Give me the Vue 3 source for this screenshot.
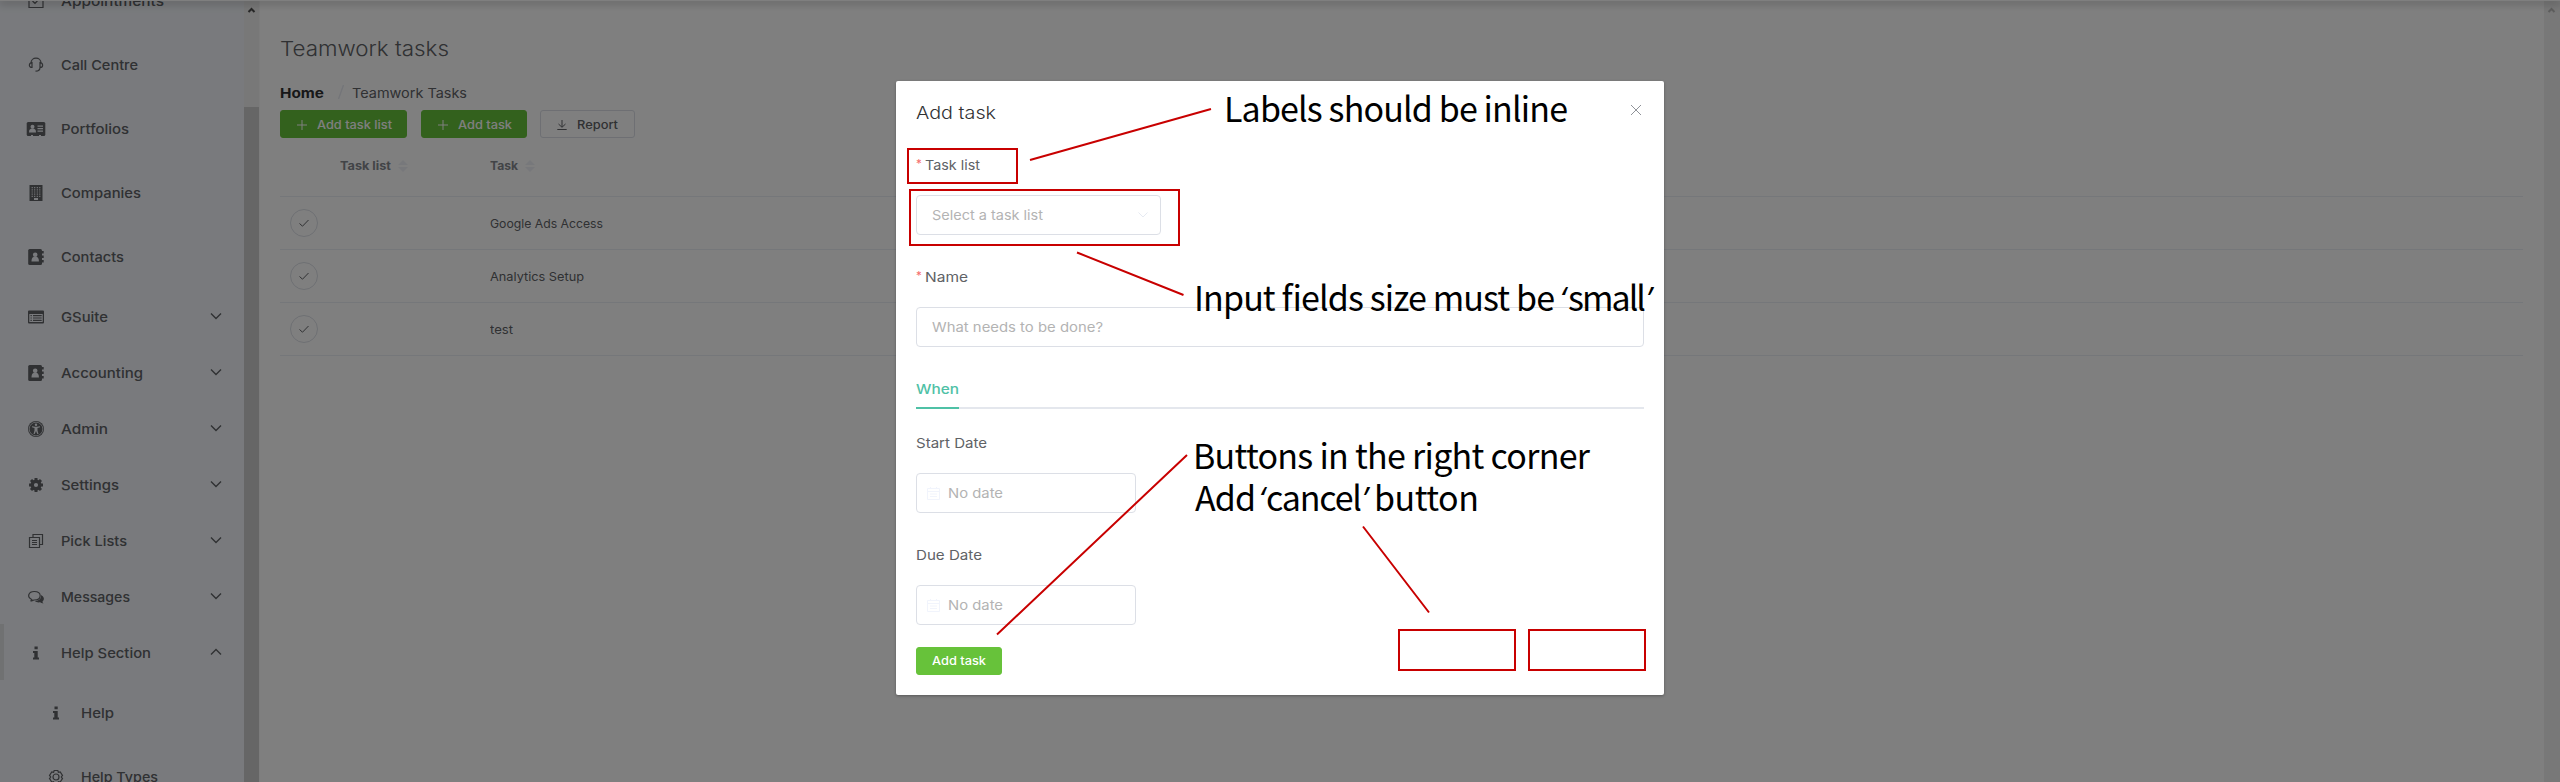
<script setup>
const items = [
  { label: 'Appointments', icon: 'calendar', w: 103 },
  { label: 'Call Centre', icon: 'headset', w: 77 },
  { label: 'Portfolios', icon: 'idcard', w: 68 },
  { label: 'Companies', icon: 'building', w: 80 },
  { label: 'Contacts', icon: 'contact', w: 63 },
  { label: 'GSuite', icon: 'listing', w: 47, arrow: 'down' },
  { label: 'Accounting', icon: 'contact', w: 82, arrow: 'down' },
  { label: 'Admin', icon: 'person', w: 47, arrow: 'down' },
  { label: 'Settings', icon: 'cog', w: 58, arrow: 'down' },
  { label: 'Pick Lists', icon: 'copy', w: 66, arrow: 'down' },
  { label: 'Messages', icon: 'chat', w: 69, arrow: 'down' },
  { label: 'Help Section', icon: 'info', w: 90, arrow: 'up', active: true },
  { label: 'Help', icon: 'info', w: 33, child: true },
  { label: 'Help Types', icon: 'gear', w: 77, child: true },
]
const rows = [
  { name: 'Google Ads Access', w: 113 },
  { name: 'Analytics Setup', w: 94 },
  { name: 'test', w: 23 },
]

// Widens a label's letterforms so that it occupies the given width.
const vFit = {
  mounted(el, { value }) {
    el.style.display = 'inline-block'
    const natural = el.getBoundingClientRect().width
    el.style.width = value + 'px'
    el.style.transformOrigin = '0 50%'
    el.style.transform = `scaleX(${value / natural})`
  },
}
</script>

<template>
  <div class="screen">
    <nav class="sidebar">
      <div
        v-for="item in items"
        :key="item.label"
        class="item"
        :class="{ sub: item.arrow, child: item.child, active: item.active }"
      >
        <svg class="icon" viewBox="0 0 20 20" width="20" height="20">
          <g v-if="item.icon === 'calendar'" class="line">
            <path d="M3 4h14v12.500H3zM6.500 10l2.500 2.500 4.500-5" />
          </g>
          <g v-else-if="item.icon === 'headset'" class="line">
            <path d="M5 8C5 1.500 15 1.500 15 8M6 7.500v5C2.500 12.500 2.500 8 6 7.500zM14 7.500v5c3.500 0 3.500-4.500 0-5zM14 12.500c0 2.500-1 3.700-4.500 3.700" />
          </g>
          <g v-else-if="item.icon === 'idcard'">
            <rect x=".7" y="3" width="18.600" height="14" rx="1.500" />
            <g class="cut">
              <circle cx="6.500" cy="7.700" r="2" />
              <path d="M3 13.500c0-3 1-4 3.500-4s3.500 1 3.500 4zM11.500 6.500H17v1.200h-5.500zM11.500 9H17v1.200h-5.500zM11.500 11.500H17v1.200h-5.500zM5 16h2v1H5zM13 16h2v1h-2z" />
            </g>
          </g>
          <g v-else-if="item.icon === 'building'">
            <path d="M3.500 2h13v16h-13z" />
            <path class="grid" d="M6.200 4v10M8.700 4v10M11.300 4v10M13.800 4v10" />
            <path class="cut" d="M8 15h4v2H8z" />
          </g>
          <g v-else-if="item.icon === 'contact'">
            <rect x="2.200" y="2" width="13.800" height="16" rx="1.500" />
            <path d="M16 4h1.700v2.500H16zM16 8.500h1.700V11H16zM16 13h1.700v2.500H16z" />
            <g class="cut">
              <circle cx="9.200" cy="7.700" r="2.300" />
              <path d="M5.500 14.500c0-3.500 1.200-4.700 3.700-4.700s3.700 1.200 3.700 4.700z" />
            </g>
          </g>
          <g v-else-if="item.icon === 'listing'">
            <path d="M3 3.500h14q1 0 1 1v11q0 1-1 1H3q-1 0-1-1v-11q0-1 1-1zM3.300 7v8h13.400V7z" fill-rule="evenodd" />
            <path d="M4.500 8h1.300v1.200H4.500zM7 8h8.700v1.200H7zM4.500 10.400h1.300v1.200H4.500zM7 10.400h8.700v1.200H7zM4.500 12.800h1.300V14H4.500zM7 12.800h8.700V14H7z" />
          </g>
          <g v-else-if="item.icon === 'person'">
            <circle cx="10" cy="10" r="8" />
            <circle class="ring" cx="10" cy="10" r="6.800" />
            <g class="cut">
              <circle cx="10" cy="5.700" r="1.200" />
              <path d="M6 7.300l3 .5h2l3-.5v1l-2.500.7v2.500l1 3.500h-1.200L10 12l-1.300 3H7.500l1-3.500V9L6 8.300z" />
            </g>
          </g>
          <g v-else-if="item.icon === 'cog'">
            <circle class="hub" cx="10" cy="10" r="3.800" />
            <path class="teeth" d="M10 3v2.500M10 14.500V17M3 10h2.500M14.500 10H17M5 5l1.800 1.800M13.200 13.200L15 15M15 5l-1.800 1.800M6.800 13.200L5 15" />
          </g>
          <g v-else-if="item.icon === 'copy'" class="line">
            <path d="M3.500 6.500h10v10h-10zM7 6V3.500h9.500v10H14M6 9.500h5M6 11.500h5M6 13.500h5" />
          </g>
          <g v-else-if="item.icon === 'chat'">
            <path class="line" d="M4.500 14c1.200-.5 1.200-.8 1.200-1.500C.5 10 2.500 4.500 8.200 4.500c8 0 8 8.500 0 8.500-1 0-2 1-3.700 1z" />
            <path d="M15 8c3 1.500 4 4.500 1.500 6.500 0 1 .5 1.500 1 2-1.500 0-2.500-.5-3.200-1.200-2.300.4-4 0-5.300-1.300C13 13.800 15.500 11.500 15 8z" />
          </g>
          <g v-else-if="item.icon === 'info'">
            <path d="M8.500 3.500h3.200v2.700H8.500zM7 8h4.700v6.500H13v2H7v-2h1.300V10H7z" />
          </g>
          <g v-else class="line">
            <path d="M8.200 3.500h3.600l.6 1.800 1.800-.3 2.300 3.400L15.300 10l1.200 1.600-2.300 3.400-1.800-.3-.6 1.800H8.200l-.6-1.800-1.800.3-2.300-3.400L4.700 10 3.500 8.400 5.800 5l1.800.3z" />
            <circle cx="10" cy="10" r="3" />
          </g>
        </svg>
        <span class="label"><span v-fit="item.w">{{ item.label }}</span></span>
        <svg v-if="item.arrow" class="arrow" :class="item.arrow" viewBox="0 0 12 8" width="12" height="8">
          <path d="M1 1.500l5 5 5-5" />
        </svg>
      </div>
    </nav>

    <div class="scrollbar side">
      <svg viewBox="0 0 16 20" width="16" height="20"><path d="M4.500 12L7.500 9l3 3" /></svg>
      <div class="thumb"></div>
    </div>

    <main class="content">
      <h1><span v-fit="169">Teamwork tasks</span></h1>
      <div class="crumbs">
        <b><span v-fit="44">Home</span></b>
        <svg width="8" height="16" viewBox="0 0 8 16"><path d="M6.500 1L1.500 15" /></svg>
        <span class="here"><span v-fit="115">Teamwork Tasks</span></span>
      </div>
      <div class="actions">
        <button class="btn green list">
          <svg width="12" height="12" viewBox="0 0 12 12"><path d="M6 1v10M1 6h10" /></svg>
          <span v-fit="75">Add task list</span>
        </button>
        <button class="btn green task">
          <svg width="12" height="12" viewBox="0 0 12 12"><path d="M6 1v10M1 6h10" /></svg>
          <span v-fit="54">Add task</span>
        </button>
        <button class="btn plain">
          <svg width="12" height="12" viewBox="0 0 12 12"><path d="M6 1v7M2.500 5L6 8.300 9.500 5M1.300 10.500h9.400" /></svg>
          <span v-fit="41">Report</span>
        </button>
      </div>
      <div class="table">
        <div class="row head">
          <div class="c1"></div>
          <div class="c2">
            <span v-fit="51">Task list</span>
            <svg width="10" height="12" viewBox="0 0 10 12"><path d="M0 5l5-5 5 5zM0 7l5 5 5-5z" /></svg>
          </div>
          <div class="c3">
            <span v-fit="28">Task</span>
            <svg width="10" height="12" viewBox="0 0 10 12"><path d="M0 5l5-5 5 5zM0 7l5 5 5-5z" /></svg>
          </div>
        </div>
        <div v-for="row in rows" :key="row.name" class="row">
          <div class="c1">
            <div class="check">
              <svg width="12" height="12" viewBox="0 0 12 12"><path d="M1.500 6.500l3 2.700L10.500 3" /></svg>
            </div>
          </div>
          <div class="c2"></div>
          <div class="c3"><span v-fit="row.w">{{ row.name }}</span></div>
        </div>
      </div>
    </main>

    <div class="scrollbar page">
      <svg viewBox="0 0 16 20" width="16" height="20"><path d="M4.500 12L7.500 9l3 3" /></svg>
    </div>
    <div class="topbar"></div>
    <div class="mask"></div>

    <section class="dialog">
      <header>
        <h2><span v-fit="80">Add task</span></h2>
        <svg class="close" width="12" height="12" viewBox="0 0 12 12"><path d="M1 1l10 10M11 1L1 11" /></svg>
      </header>
      <div class="field">
        <label><i>*</i><span v-fit="55">Task list</span></label>
        <div class="input select">
          <span v-fit="111">Select a task list</span>
          <svg width="12" height="8" viewBox="0 0 12 8"><path d="M1.500 1.500L6 6l4.500-4.500" /></svg>
        </div>
      </div>
      <div class="field">
        <label><i>*</i><span v-fit="43">Name</span></label>
        <div class="input"><span v-fit="171">What needs to be done?</span></div>
      </div>
      <div class="tabs"><div class="tab"><span v-fit="43">When</span></div></div>
      <div v-for="d in [['Start Date', 71], ['Due Date', 66]]" :key="d[0]" class="field">
        <label><span v-fit="d[1]">{{ d[0] }}</span></label>
        <div class="input date">
          <svg width="13" height="13" viewBox="0 0 13 13"><path d="M.5 1.500h12v11H.5zM.5 4.500h12M3 7h7M3 9.500h7M3.500 0v2M9.500 0v2" /></svg>
          <span v-fit="55">No date</span>
        </div>
      </div>
      <button class="btn green submit"><span v-fit="54">Add task</span></button>
    </section>

    <svg class="notes" width="2560" height="782" viewBox="0 0 2560 782">
      <g class="marks">
        <rect x="908" y="149" width="109" height="34" />
        <rect x="910" y="190" width="269" height="55" />
        <rect x="1399" y="630" width="116" height="40" />
        <rect x="1529" y="630" width="116" height="40" />
        <path d="M1030 160l181-51M1077 252.500L1183.500 295M1187 455L997 634.500M1363 526.500l66 86" />
      </g>
      <text x="1224" y="121.500" textLength="344">Labels should be inline</text>
      <text x="1194" y="311" textLength="361">Input fields size must be</text>
      <text x="1560" y="311" class="quote">‘</text>
      <text x="1568" y="311" textLength="78">small</text>
      <text x="1646" y="311" class="quote">’</text>
      <text x="1193" y="468.500" textLength="397">Buttons in the right corner</text>
      <text x="1195" y="511" textLength="61">Add</text>
      <text x="1259" y="511" class="quote">‘</text>
      <text x="1266" y="511" textLength="96">cancel</text>
      <text x="1362" y="511" class="quote">’</text>
      <text x="1374" y="511" textLength="105">button</text>
    </svg>
  </div>
</template>

<style>
body { margin: 0; overflow: hidden; }
</style>

<style scoped>
* { box-sizing: border-box; }
.screen {
  position: relative;
  display: flex;
  width: 2560px;
  height: 782px;
  overflow: hidden;
  background: #fff;
  color: #606266;
  font: 400 13.5px/20px Inter, "Open Sans", sans-serif;
}
.screen span { white-space: nowrap; text-align: left; }
svg { display: block; flex: none; fill: none; stroke: currentColor; }

.sidebar {
  flex: none;
  width: 244px;
  height: 814px;
  margin-top: -32px;
  overflow: hidden;
  background: #f2f5fa;
  font-weight: 500;
}
.item {
  display: flex;
  align-items: center;
  height: 64px;
  padding: 2px 22px 0 26px;
}
.item.sub { height: 56px; }
.item.child { padding-left: 46px; }
.item.active { border-left: 4px solid #e1e2e4; padding-left: 22px; }
.icon { fill: currentColor; stroke: none; }
.line { fill: none; stroke: currentColor; stroke-width: 1.2; }
.cut { fill: #f2f5fa; }
.grid { stroke: #f2f5fa; stroke-width: 1.1; stroke-dasharray: 1.2 1; }
.ring { fill: none; stroke: #f2f5fa; stroke-width: .7; }
.hub { fill: none; stroke: currentColor; stroke-width: 3.4; }
.teeth { stroke: currentColor; stroke-width: 3; }
.label { flex: 1; margin-left: 15px; }
.arrow { margin-top: -3px; stroke-width: 1.4; }
.arrow.up { transform: rotate(180deg); }

.scrollbar { flex: none; width: 16px; background: #f0f0f0; color: #505050; }
.scrollbar svg { stroke-width: 2; }
.side { border-right: 1px solid #f8f8f8; }
.thumb { height: 675px; margin-top: 87px; background: #cdcdcd; }
.page { color: #bcbcbc; }

.content { flex: 1; padding: 35px 21px 0 20px; }
h1 { margin: 0; color: #606266; font-size: 20.5px; font-weight: 300; line-height: 28px; height: 28px; }
.crumbs { display: flex; height: 20px; margin-top: 20px; }
.crumbs b { width: 44px; color: #303133; font-weight: 700; }
.crumbs svg { margin: 1px 8px 0 13px; color: #e8ebf2; stroke-width: 1.4; }
.crumbs .here { margin-left: -1px; }
.actions { display: flex; margin-top: 7px; }
.btn {
  display: flex;
  align-items: center;
  height: 28px;
  padding: 1px 0 0 15px;
  border: 1px solid #dcdfe6;
  border-radius: 3px;
  background: #fff;
  color: #606266;
  font: 500 11.7px/18px Inter, sans-serif;
}
.btn svg { margin-right: 9px; }
.btn.green { border-color: #67c23a; background: #67c23a; color: #fff; }
.btn.list { width: 127px; }
.btn.task { width: 106px; margin-left: 14px; }
.btn.plain { width: 95px; margin-left: 13px; }

.table { font-size: 11.8px; }
.row { display: flex; align-items: center; height: 53px; border-bottom: 1px solid #ebeef5; }
.row.head { height: 59px; padding-bottom: 3px; color: #85888e; font-weight: 700; }
.c1 { width: 60px; padding-left: 10px; }
.c2 { width: 150px; }
.c3 { flex: 1; padding-top: 1px; }
.c2, .c3 { display: flex; align-items: center; }
.head .c3 { padding-top: 0; }
.head svg { margin-left: 7px; fill: #eef0f7; stroke: none; }
.check {
  display: flex;
  align-items: center;
  justify-content: center;
  width: 28px;
  height: 28px;
  border: 1px solid #dcdfe6;
  border-radius: 50%;
}

.topbar { position: absolute; inset: 0 0 auto; height: 1px; background: #fff; box-shadow: 0 1px 9px 1px rgba(0, 0, 0, .4); }
.mask { position: absolute; inset: 0; background: rgba(0, 0, 0, .5); }

.dialog {
  position: absolute;
  left: 896px;
  top: 81px;
  width: 768px;
  height: 614px;
  padding: 20px;
  border-radius: 2px;
  background: #fff;
  box-shadow: 0 1px 3px rgba(0, 0, 0, .3);
}
header { display: flex; justify-content: space-between; height: 24px; margin-bottom: 30px; }
h2 { margin: 0; color: #303133; font-size: 17.3px; font-weight: 300; line-height: 24px; }
.close { margin: 3px 2px 0 0; color: #909399; stroke-width: 1; }
.field { height: 112px; }
label { display: flex; height: 40px; line-height: 20px; }
label i { width: 9px; color: #f56c6c; font-size: 11.5px; font-style: normal; line-height: 19px; }
.input {
  display: flex;
  align-items: center;
  height: 40px;
  padding: 0 15px;
  border: 1px solid #dcdfe6;
  border-radius: 4px;
  color: #b3b3b3;
}
.select { width: 245px; justify-content: space-between; padding-right: 11px; }
.select svg { color: #e6eaf2; }
.tabs { display: flex; height: 30px; margin-bottom: 24px; border-bottom: 2px solid #e4e7ed; }
.tab { width: 43px; height: 30px; color: #4fc1a6; border-bottom: 2px solid #4fc1a6; font-weight: 500; }
.date { width: 220px; padding-left: 10px; }
.date svg { margin-right: 8px; color: #f1f4fc; }
.submit { width: 86px; margin-top: -10px; padding-top: 0; }

.notes { position: absolute; inset: 0; }
.marks { stroke: #c80000; stroke-width: 2; }
.notes text { fill: #000; stroke: none; font: 400 34px "Noto Sans CJK SC", sans-serif; }
.notes .quote { font: italic 400 32px "Open Sans", sans-serif; }
</style>
